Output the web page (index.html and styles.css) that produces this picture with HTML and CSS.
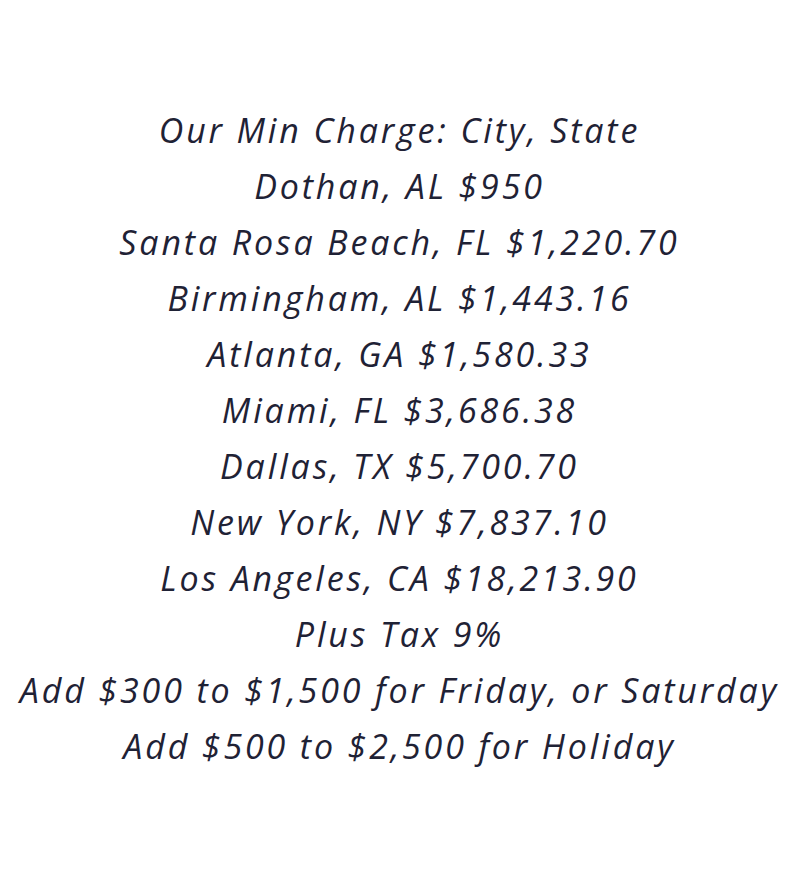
FILE: index.html
```html
<!DOCTYPE html>
<html>
<head>
<meta charset="utf-8">
<link rel="stylesheet" href="styles.css">
</head>
<body>
<div class="rates">
<p class="line">Our Min Charge: City, State</p>
<p class="line">Dothan, AL $950</p>
<p class="line">Santa Rosa Beach, FL $1,220.70</p>
<p class="line">Birmingham, AL $1,443.16</p>
<p class="line">Atlanta, GA $1,580.33</p>
<p class="line">Miami, FL $3,686.38</p>
<p class="line">Dallas, TX $5,700.70</p>
<p class="line">New York, NY $7,837.10</p>
<p class="line">Los Angeles, CA $18,213.90</p>
<p class="line">Plus Tax 9%</p>
<p class="line">Add $300 to $1,500 for Friday, or Saturday</p>
<p class="line">Add $500 to $2,500 for Holiday</p>
</div>
</body>
</html>
```
FILE: styles.css
```css
html, body {
  margin: 0;
  padding: 0;
  background: #ffffff;
}
.rates {
  padding-top: 102px;
  text-align: center;
  font-family: "Open Sans", sans-serif;
  font-style: italic;
  font-weight: 400;
  font-size: 34px;
  letter-spacing: 2.85px;
  line-height: 56px;
  color: #1f2235;
}
.line {
  margin: 0;
  white-space: nowrap;
}
```
